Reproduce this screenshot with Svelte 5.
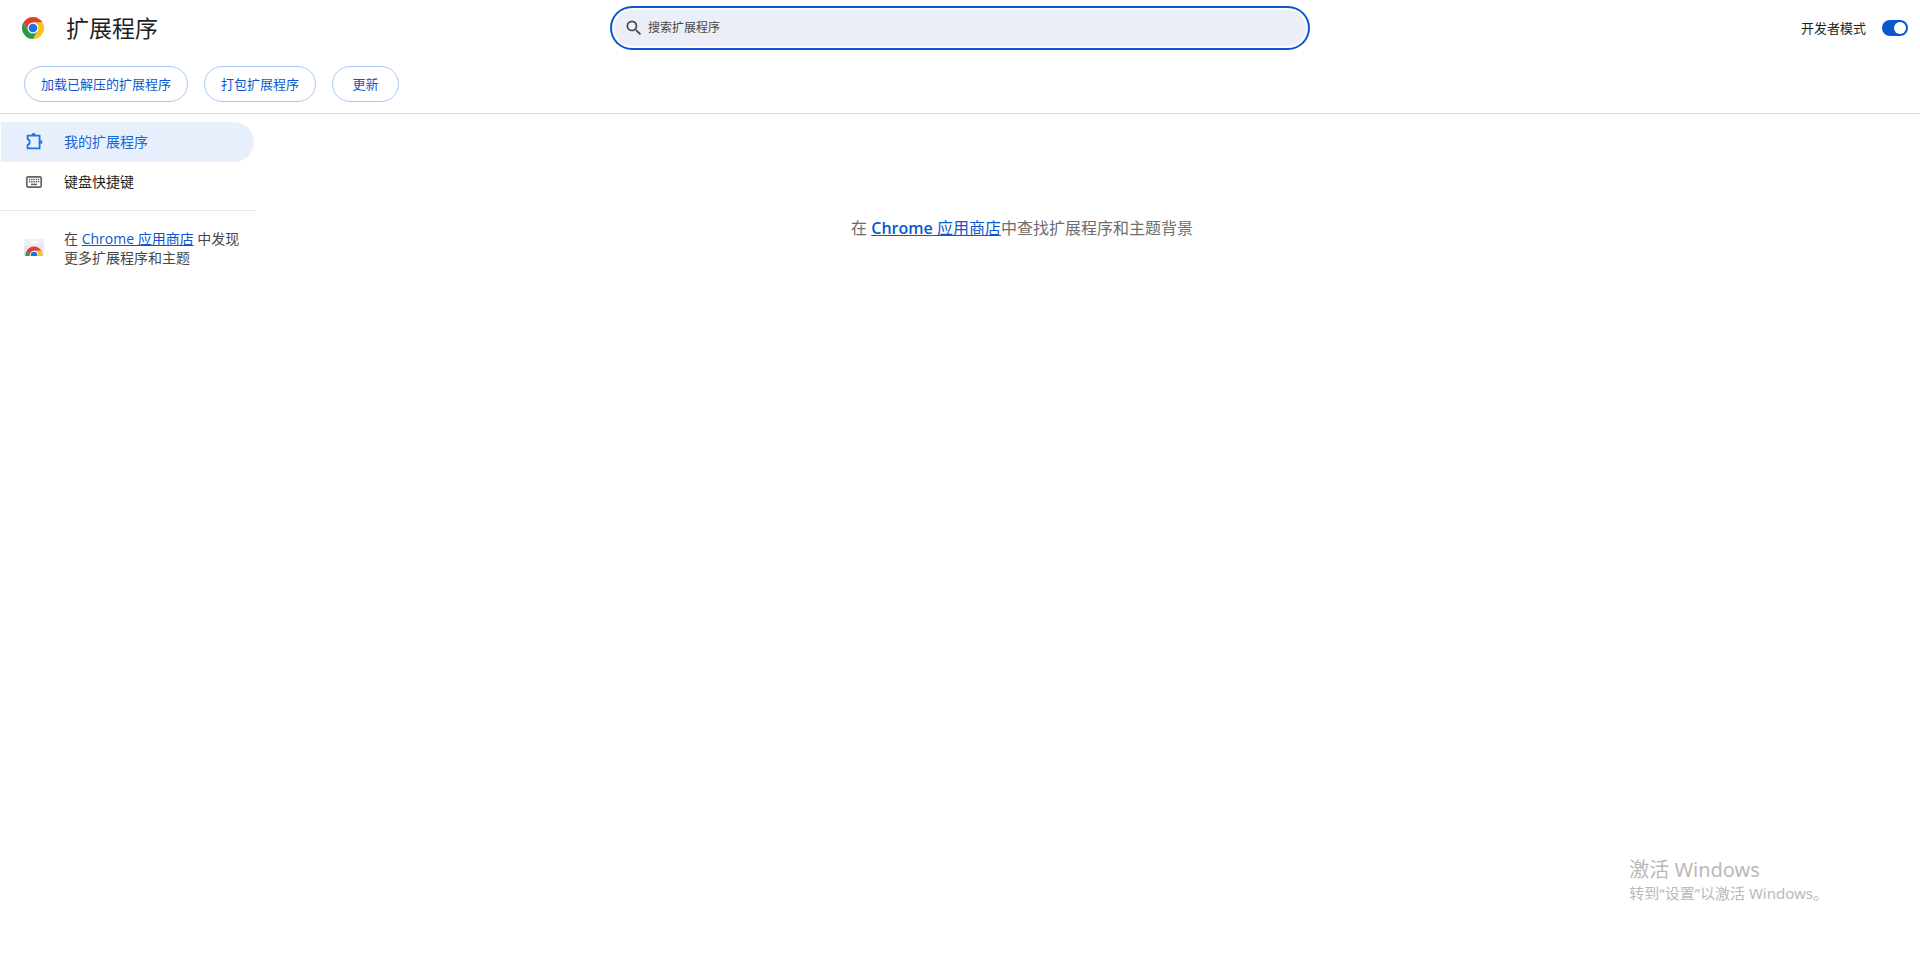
<script>
  let filter = $state('');
  let devMode = $state(true);
  let selected = $state('extensions');

  const actions = ['加载已解压的扩展程序', '打包扩展程序', '更新'];
</script>

{#snippet chrome()}
  <path fill="#e33b2e" d="M24 12h20.781A24 24 0 0 0 3.216 12.003L13.606 30 24 24z" />
  <path fill="#fcc016" d="M34.391 30.003 24.001 48A23.994 23.994 0 0 0 44.78 12.003H24V24z" />
  <path fill="#2a9a48" d="M13.609 30.003 3.218 12.006A23.994 23.994 0 0 0 24.003 48l10.39-17.997L24 24z" />
  <circle cx="24" cy="24" r="12" fill="#fff" />
  <circle cx="24" cy="24" r="9.5" fill="#1a73e8" />
{/snippet}

<div class="page">
  <header class="toolbar">
    <div class="brand">
      <svg class="logo" viewBox="0 0 48 48" aria-hidden="true">{@render chrome()}</svg>
      <h1>扩展程序</h1>
    </div>
    <label class="search">
      <svg viewBox="0 0 24 24" aria-hidden="true">
        <path fill="#474747" d="M15.5 14h-.79l-.28-.27A6.471 6.471 0 0 0 16 9.5 6.5 6.5 0 1 0 9.5 16c1.61 0 3.09-.59 4.23-1.57l.27.28v.79l5 4.99L20.49 19l-4.99-5zm-6 0C7.01 14 5 11.99 5 9.5S7.01 5 9.5 5 14 7.01 14 9.5 11.99 14 9.5 14z" />
      </svg>
      <input type="text" placeholder="搜索扩展程序" aria-label="搜索扩展程序" bind:value={filter} />
    </label>
    <div class="dev-mode">
      <label for="dev-mode">开发者模式</label>
      <input id="dev-mode" class="toggle" type="checkbox" role="switch" bind:checked={devMode} />
    </div>
  </header>

  {#if devMode}
    <div class="dev-drawer">
      {#each actions as action}
        <button type="button">{action}</button>
      {/each}
    </div>
  {/if}

  <div class="container">
    <aside>
      <nav>
        <a href="#extensions" class:selected={selected === 'extensions'} onclick={() => selected = 'extensions'}>
          <svg viewBox="0 0 20 20" aria-hidden="true" fill="none" stroke="currentColor" stroke-width="1.8">
            <path stroke-linejoin="round" d="M3.600 3.600h12v12.800h-12v-3.600c1.300-.3 2.100-1.400 2.100-2.800s-.8-2.500-2.100-2.800z" />
            <path fill="currentColor" stroke="none" d="M7.600 3a2 2 0 0 1 4 0zM16.400 8a2.100 2.100 0 0 1 0 4.200z" />
          </svg>
          我的扩展程序
        </a>
        <a href="#shortcuts" class:selected={selected === 'shortcuts'} onclick={() => selected = 'shortcuts'}>
          <svg viewBox="0 0 20 20" aria-hidden="true">
            <rect x="2.800" y="4.800" width="14.400" height="10.400" rx="1.500" fill="none" stroke="#5f6368" stroke-width="1.700" />
            <path stroke="#5f6368" stroke-width="1.400" stroke-dasharray="1.400 0.800" d="M5 7.500h10.500M5 9.800h10.500" />
            <path stroke="#5f6368" stroke-width="1.500" d="M7 12.400h6" />
          </svg>
          键盘快捷键
        </a>
      </nav>
      <div class="promo">
        <svg viewBox="0 0 20 20" aria-hidden="true">
          <clipPath id="bag"><path d="M0 1h20v17H0z" /></clipPath>
          <path fill="#eceef1" d="M0 1h20v17H0z" />
          <path fill="#e4e6ea" d="M0 8h20v10H0z" />
          <rect x="7" y="3" width="6" height="2" rx="1" fill="#fff" />
          <g clip-path="url(#bag)">
            <g transform="translate(1.500 8.500) scale(.354)">{@render chrome()}</g>
          </g>
        </svg>
        <p>在 <a href="#store">Chrome 应用商店</a> 中发现更多扩展程序和主题</p>
      </div>
    </aside>
    <main>
      <p>在 <a href="#store"><span>Chrome</span> 应用商店</a>中查找扩展程序和主题背景</p>
    </main>
  </div>

  <div class="watermark">
    <div class="watermark-title">激活 Windows</div>
    <div>转到“设置”以激活 Windows。</div>
  </div>
</div>

<style>
:global(body) {
  margin: 0;
  background: #fff;
}

.page {
  position: relative;
  min-height: 100vh;
  font-family: "Open Sans", "Noto Sans CJK SC", sans-serif;
  font-size: 13px;
  line-height: 20px;
  color: #1f1f1f;
}

.toolbar {
  display: grid;
  grid-template-columns: 1fr minmax(200px, 692px) 1fr;
  align-items: center;
  height: 56px;
}

.brand {
  display: flex;
  align-items: center;
  gap: 22px;
  padding-left: 22px;
}

.logo {
  width: 22px;
  height: 22px;
}

h1 {
  margin: 0;
  font-size: 23px;
  line-height: 32px;
  font-weight: 400;
}

.search {
  display: flex;
  align-items: center;
  gap: 4px;
  height: 36px;
  padding: 0 10px;
  border-radius: 18px;
  background: #ebeef7;
  box-shadow: 0 0 0 2px #fff, 0 0 0 4px #0b57d0;
}

.search svg {
  width: 20px;
  height: 20px;
}

.search input {
  flex: 1;
  padding: 0;
  border: none;
  outline: none;
  background: none;
  font: inherit;
  font-size: 12px;
}

.search input::placeholder {
  color: #474747;
  opacity: 1;
}

.dev-mode {
  display: flex;
  align-items: center;
  justify-content: flex-end;
  gap: 16px;
  padding-right: 12px;
}

.toggle {
  appearance: none;
  display: flex;
  box-sizing: border-box;
  width: 26px;
  height: 16px;
  margin: 0;
  padding: 2px;
  border-radius: 8px;
  background: #747775;
  cursor: pointer;
}

.toggle::before {
  content: "";
  width: 12px;
  height: 12px;
  border-radius: 50%;
  background: #fff;
}

.toggle:checked {
  justify-content: flex-end;
  background: #0b57d0;
}

.dev-drawer {
  display: flex;
  gap: 16px;
  padding: 10px 24px 11px;
  border-bottom: 1px solid #d9dadc;
}

.dev-drawer button {
  min-width: 67px;
  height: 36px;
  padding: 0 16px;
  border: 1px solid #a8c7fa;
  border-radius: 18px;
  background: #fff;
  font: inherit;
  color: #0b57d0;
  cursor: pointer;
}

.container {
  display: flex;
  padding-top: 8px;
}

aside {
  flex: 0 0 256px;
  font-size: 14px;
}

nav {
  padding: 0 2px 8px 1px;
  border-bottom: 1px solid #e8eaed;
}

nav a {
  display: flex;
  align-items: center;
  gap: 20px;
  height: 40px;
  padding-left: 23px;
  border-radius: 0 20px 20px 0;
  color: #1f1f1f;
  text-decoration: none;
}

nav a.selected {
  background: #e8f0fe;
  color: #1967d2;
}

nav a.selected svg {
  color: #1a73e8;
}

aside svg {
  flex: none;
  width: 20px;
  height: 20px;
}

.promo {
  display: flex;
  align-items: center;
  gap: 20px;
  padding: 18px 16px 18px 24px;
  line-height: 19px;
  color: #474747;
}

p {
  margin: 0;
}

p a {
  color: #0b57d0;
}

main {
  flex: 1;
  padding: 94px 132px 0 0;
  text-align: center;
  font-size: 16px;
  line-height: 24px;
  color: #6e6e6e;
}

main a span {
  font-weight: 600;
}

.watermark {
  position: absolute;
  right: 92px;
  bottom: 50px;
  font-family: "Noto Sans", "Noto Sans CJK SC", sans-serif;
  font-size: 15px;
  color: #b9b9b9;
  pointer-events: none;
}

.watermark-title {
  font-size: 20px;
  line-height: 26px;
}
</style>
